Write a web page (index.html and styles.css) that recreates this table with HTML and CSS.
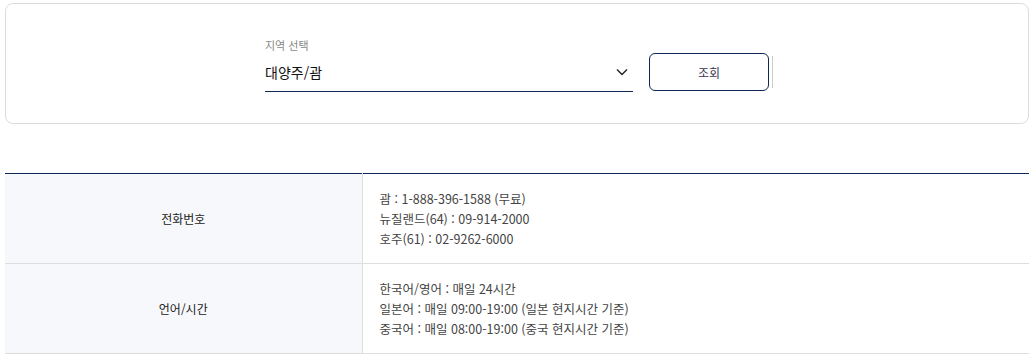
FILE: index.html
```html
<!DOCTYPE html>
<html lang="ko">
<head>
  <meta charset="UTF-8">
  <meta name="viewport" content="width=device-width, initial-scale=1.0">
  <title>고객센터 안내</title>
  <link rel="stylesheet" href="styles.css">
</head>
<body>
  <div class="container">
    <!-- 지역 선택 -->
    <div class="search-box">
      <div class="search-form">
        <div class="select-group">
          <label class="select-label" for="region">지역 선택</label>
          <div class="select-field">
            <span class="select-value" id="region">대양주/괌</span>
            <svg class="select-arrow" width="14" height="14" viewBox="0 0 14 14">
              <path d="M2 4.5 L7 9.5 L12 4.5" fill="none" stroke="#222" stroke-width="1.4"/>
            </svg>
          </div>
        </div>
        <button class="btn-search" type="button">조회</button>
        <span class="divider"></span>
      </div>
    </div>

    <!-- 연락처 안내 -->
    <table class="info-table">
      <colgroup>
        <col class="col-head">
        <col>
      </colgroup>
      <tr>
        <th>전화번호</th>
        <td>
          괌 : 1-888-396-1588 (무료)<br>
          뉴질랜드(64) : 09-914-2000<br>
          호주(61) : 02-9262-6000
        </td>
      </tr>
      <tr>
        <th>언어/시간</th>
        <td>
          한국어/영어 : 매일 24시간<br>
          일본어 : 매일 09:00-19:00 (일본 현지시간 기준)<br>
          중국어 : 매일 08:00-19:00 (중국 현지시간 기준)
        </td>
      </tr>
    </table>
  </div>
</body>
</html>
```
FILE: styles.css
```css
body {
  margin: 0;
  padding: 0;
  font-family: "Noto Sans CJK KR", "Noto Sans", sans-serif;
  color: #333;
  background: #fff;
}
.container {
  padding: 3px 5px 0;
}
.search-box {
  height: 121px;
  box-sizing: border-box;
  border: 1px solid #dcdcdc;
  border-radius: 8px;
  padding-top: 33px;
}
.search-form {
  display: flex;
  justify-content: center;
  align-items: flex-end;
  padding-left: 4px;
}
.select-group {
  width: 368px;
}
.select-label {
  display: block;
  font-size: 11px;
  line-height: 16px;
  color: #888;
  margin-bottom: 3px;
}
.select-field {
  display: flex;
  align-items: center;
  justify-content: space-between;
  height: 36px;
  box-sizing: border-box;
  border-bottom: 1px solid #0d2756;
  padding-bottom: 3px;
}
.select-value {
  font-size: 14px;
  color: #111;
}
.select-arrow {
  margin-right: 4px;
}
.btn-search {
  width: 120px;
  height: 38px;
  margin-left: 16px;
  margin-bottom: 1px;
  border: 1px solid #0d2756;
  border-radius: 6px;
  background: #fff;
  font-family: inherit;
  font-size: 12px;
  color: #3a3650;
  cursor: pointer;
}
.divider {
  width: 1px;
  height: 32px;
  margin: 0 0 4px 3px;
  background: #ccc;
}
.info-table {
  width: 100%;
  margin-top: 49px;
  table-layout: fixed;
  border-collapse: collapse;
  border-top: 1px solid #0d2756;
  font-size: 12px;
}
.col-head {
  width: 357px;
}
.info-table tr {
  border-bottom: 1px solid #dedede;
}
.info-table th {
  background: #f7f8fc;
  border-right: 1px solid #dedede;
  font-weight: normal;
  color: #222;
}
.info-table td {
  padding: 15px 17px 14px;
  font-size: 12.5px;
  line-height: 20px;
  color: #444;
}
```
